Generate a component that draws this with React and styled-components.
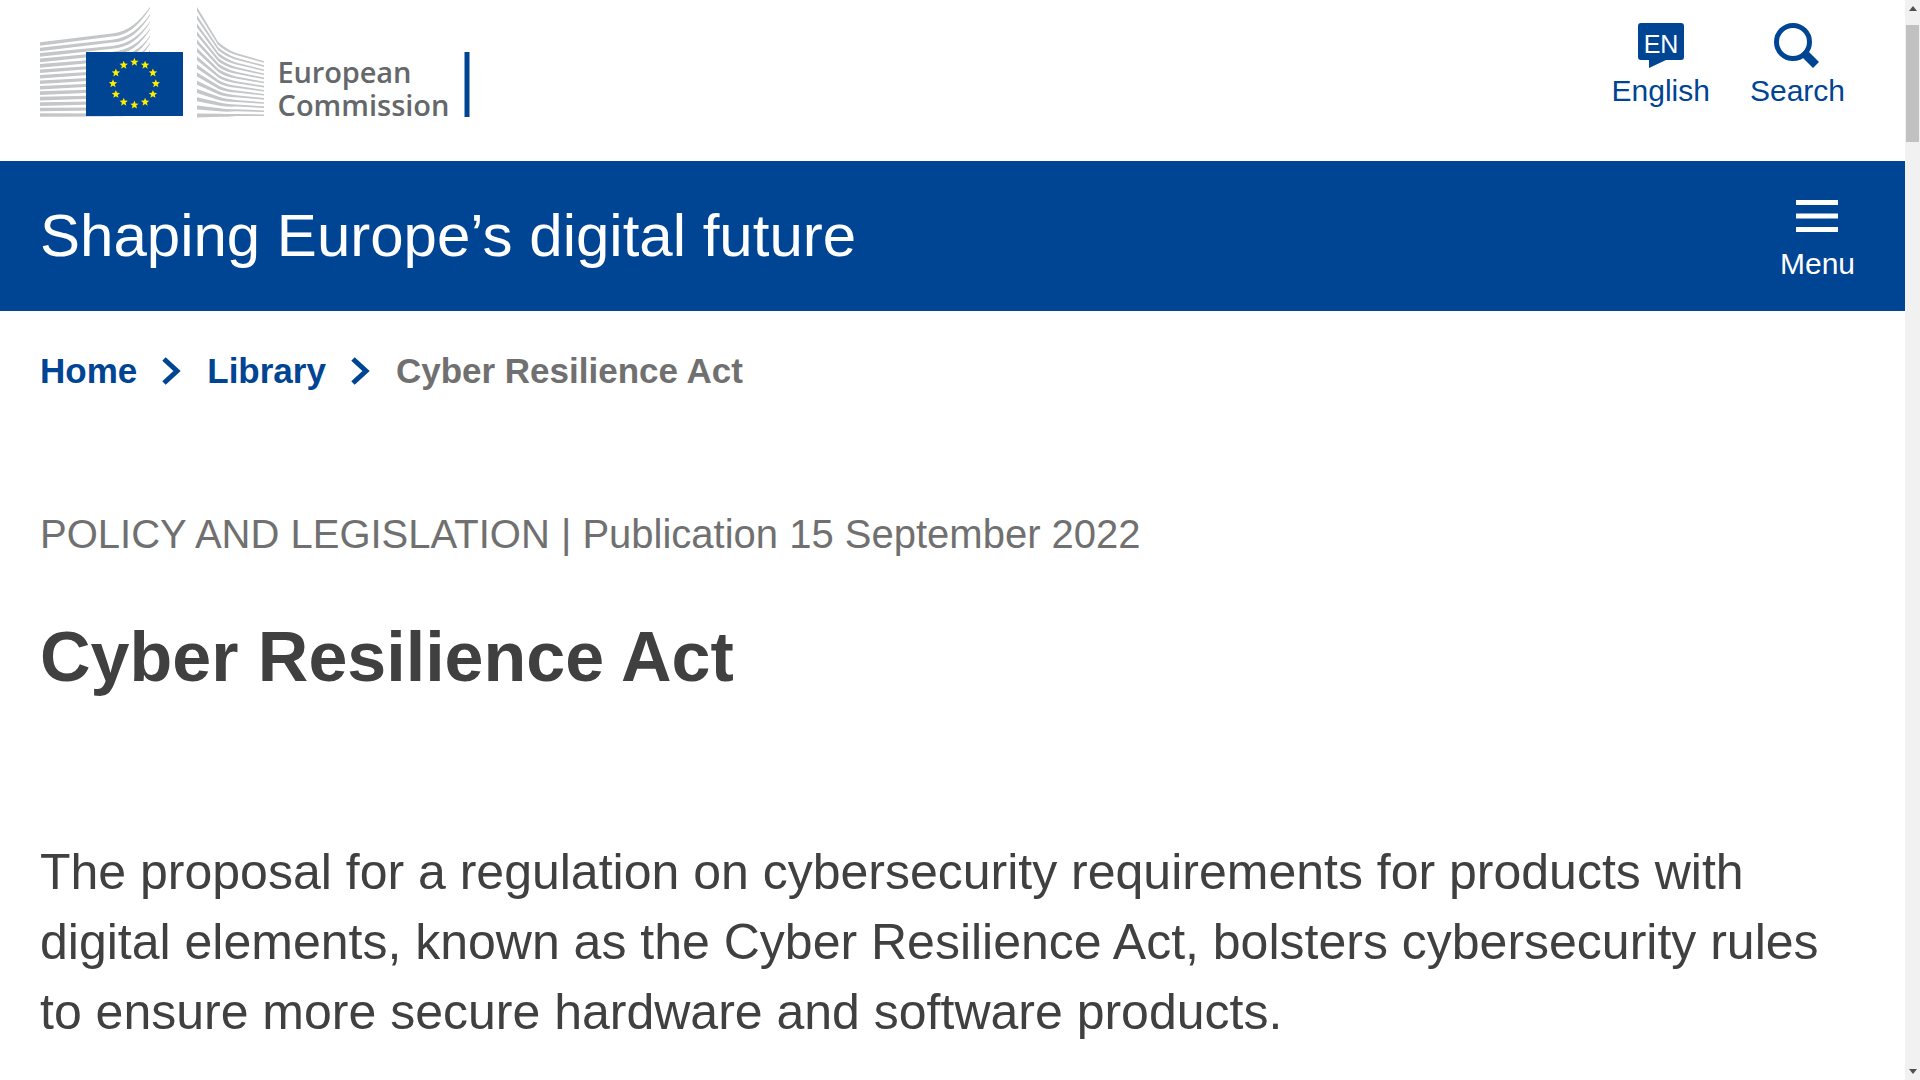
import React from "react";
import styled, { createGlobalStyle } from "styled-components";

const Global = createGlobalStyle`
  html, body { margin: 0; padding: 0; height: 100%; overflow: hidden; background: #fff; }
  body { font-family: "Liberation Sans", Arial, sans-serif; color: #404040; }
`;
const Shell = styled.div`display: flex; width: 1920px; height: 1080px; overflow: hidden;`;
const Page = styled.div`flex: 1; min-width: 0; overflow: hidden;`;
const Scrollbar = styled.div`
  width: 15px; background: #f1f1f1; display: flex; flex-direction: column; align-items: center;
`;
const ScrollBtn = styled.div`
  height: 17px; width: 15px; display: flex; align-items: center; justify-content: center;
`;
const Thumb = styled.div`width: 13px; height: 117px; background: #c1c1c1; margin-top: 8px;`;
const Spacer = styled.div`flex: 1;`;
const Arrow = styled.svg`width: 8px; height: 5px; fill: #505050; display: block;`;

const TopBar = styled.header`
  height: 161px; display: flex; justify-content: space-between; align-items: flex-start; padding: 0 40px;
`;
const Logo = styled.svg`display: block; width: 440px; height: 130px;`;
const Actions = styled.nav`display: flex; gap: 40px; margin: 23px 20px 0 0;`;
const Action = styled.a`
  display: flex; flex-direction: column; align-items: center; color: #004494;
  font-size: 30px; line-height: 34px; text-decoration: none;
`;
const ActionIcon = styled.svg`display: block; width: 46px; height: 46px; margin-bottom: 5px;`;

const Band = styled.div`
  height: 150px; background: #004494; color: #fff; display: flex; align-items: center;
  justify-content: space-between; padding: 0 50px 0 40px;
`;
const SiteName = styled.div`font-size: 60px; line-height: 72px;`;
const MenuButton = styled.button`
  background: none; border: 0; color: #fff; font: inherit; font-size: 30px; padding: 9px 0 0; line-height: 34px;
  display: flex; flex-direction: column; align-items: center; gap: 14px;
`;
const Burger = styled.svg`display: block; width: 42px; height: 33px; fill: #fff;`;

const Crumbs = styled.nav`
  display: flex; align-items: center; padding: 39px 40px 0; font-size: 35px; font-weight: 700; line-height: 42px;
`;
const Crumb = styled.a`color: ${p => (p.$current ? "#707070" : "#004494")}; text-decoration: none;`;
const Chevron = styled.svg`display: block; width: 20px; height: 28px; margin: 0 25px; fill: none; stroke: #004494; stroke-width: 5px;`;

const Main = styled.main`padding: 0 40px;`;
const Meta = styled.div`margin-top: 118px; font-size: 40px; line-height: 48px; color: #707070;`;
const Title = styled.h1`margin: 59px 0 0; font-size: 70px; line-height: 80px; font-weight: 700; color: #404040;`;
const Lead = styled.p`margin: 140px 0 0; font-size: 50px; line-height: 70px; color: #404040;`;

const leftPath = (i, w0, w1) => {
  const t = i / 13;
  const y0 = 44 + 71 * t;
  const y1 = 35 + 80 * t;
  const y3 = 7 + 7.2 * i;
  const up = `M40 ${y0 - w0 / 2} L112 ${y1 - w0 / 2.6} C128 ${y1 - 3} 140 ${y3 + 14} 150 ${y3}`;
  const down = `L150 ${y3 + w1} C140 ${y3 + 16 + w1} 128 ${y1 + 1} 112 ${y1 + w0 / 2.6} L40 ${y0 + w0 / 2} Z`;
  return `${up} ${down}`;
};

const rightPath = (i, w0, w1) => {
  const t = i / 13;
  const y0 = 7 + 8.2 * i;
  const yk = 50 + 65 * t;
  const ye = 62 + 4.1 * i;
  const k = 1 - t;
  const up = `M197 ${y0} L${218 + 2 * t} ${yk - 7 * k - w0 / 3} Q226 ${yk - 1} 236 ${yk + 4 * k - w0 / 4} L264 ${ye - w1 / 2}`;
  const down = `L264 ${ye + w1 / 2} L236 ${yk + 4 * k + w0 / 4} Q226 ${yk + 2} ${218 + 2 * t} ${yk - 7 * k + w0 / 2.2} L197 ${y0 + w0} Z`;
  return `${up} ${down}`;
};

const stripes = Array.from({ length: 14 }, (_, i) => i);

const LogoMark = () => (
  <Logo viewBox="40 0 440 130" role="img" aria-label="European Commission">
    <g fill="#c4c6c8">
      {stripes.map(i => <path key={`l${i}`} d={leftPath(i, 3.6, 1.2)} />)}
      {stripes.map(i => <path key={`r${i}`} d={rightPath(i, 4, 1.6)} />)}
    </g>
    <rect x="86" y="52" width="97" height="64" fill="#004494" />
    <g fill="#ffed00">
      {Array.from({ length: 12 }).map((_, i) => {
        const a = (i * Math.PI) / 6;
        const cx = 134.4 + 21.4 * Math.sin(a);
        const cy = 83.6 - 21.4 * Math.cos(a);
        const pts = Array.from({ length: 10 }).map((__, k) => {
          const r = k % 2 ? 1.9 : 4.4;
          const t = (k * Math.PI) / 5;
          return `${(cx + r * Math.sin(t)).toFixed(2)},${(cy - r * Math.cos(t)).toFixed(2)}`;
        }).join(" ");
        return <polygon key={i} points={pts} />;
      })}
    </g>
    <g fontFamily="'Open Sans', 'Noto Sans', sans-serif" fontSize="29" fontWeight="600" fill="#65686b">
      <text x="277.5" y="83" textLength="134" lengthAdjust="spacing">European</text>
      <text x="277.5" y="116" textLength="172" lengthAdjust="spacing">Commission</text>
    </g>
    <rect x="464.5" y="52" width="5" height="65" fill="#004494" />
  </Logo>
);

export default function App() {
  return (
    <Shell>
      <Global />
      <Page>
        <TopBar>
          <LogoMark />
          <Actions>
            <Action>
              <ActionIcon viewBox="0 0 46 46">
                <path d="M3 0H43a3 3 0 0 1 3 3V34a3 3 0 0 1-3 3H28L11 45V37H3a3 3 0 0 1-3-3V3a3 3 0 0 1 3-3Z" fill="#004494" />
                <text x="23" y="30" textAnchor="middle" fontSize="25" fill="#fff" fontFamily="'Liberation Sans', sans-serif">EN</text>
              </ActionIcon>
              English
            </Action>
            <Action>
              <ActionIcon viewBox="0 0 46 46">
                <circle cx="19" cy="19" r="16.5" fill="none" stroke="#004494" strokeWidth="5" />
                <path d="M29 29 L42 42" stroke="#004494" strokeWidth="8.5" fill="none" />
              </ActionIcon>
              Search
            </Action>
          </Actions>
        </TopBar>
        <Band>
          <SiteName>Shaping Europe’s digital future</SiteName>
          <MenuButton>
            <Burger viewBox="0 0 42 33">
              <rect y="0" width="42" height="5" />
              <rect y="13.5" width="42" height="5" />
              <rect y="27" width="42" height="5" />
            </Burger>
            Menu
          </MenuButton>
        </Band>
        <Crumbs>
          <Crumb>Home</Crumb>
          <Chevron viewBox="0 0 20 28"><path d="M2 2 L15 14 L2 26" /></Chevron>
          <Crumb>Library</Crumb>
          <Chevron viewBox="0 0 20 28"><path d="M2 2 L15 14 L2 26" /></Chevron>
          <Crumb $current>Cyber Resilience Act</Crumb>
        </Crumbs>
        <Main>
          <Meta>POLICY AND LEGISLATION | Publication 15 September 2022</Meta>
          <Title>Cyber Resilience Act</Title>
          <Lead>The proposal for a regulation on cybersecurity requirements for products with digital elements, known as the Cyber Resilience Act, bolsters cybersecurity rules to ensure more secure hardware and software products.</Lead>
        </Main>
      </Page>
      <Scrollbar>
        <ScrollBtn><Arrow viewBox="0 0 8 5"><path d="M4 0 L8 5 H0Z" /></Arrow></ScrollBtn>
        <Thumb />
        <Spacer />
        <ScrollBtn><Arrow viewBox="0 0 8 5"><path d="M0 0 H8 L4 5Z" /></Arrow></ScrollBtn>
      </Scrollbar>
    </Shell>
  );
}
